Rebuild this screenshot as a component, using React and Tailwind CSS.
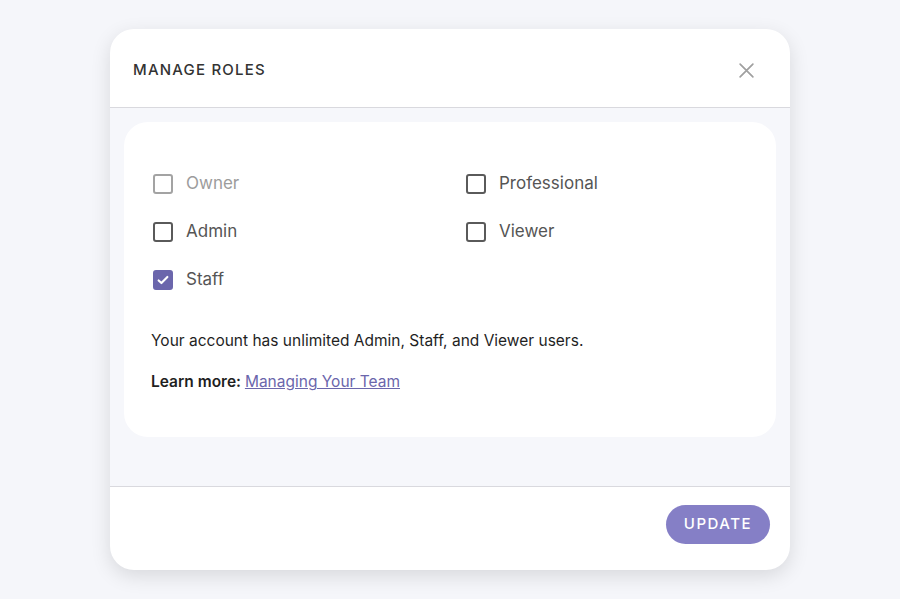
import { useState } from "react"

const roles = [
  { name: "Owner", disabled: true },
  { name: "Professional" },
  { name: "Admin" },
  { name: "Viewer" },
  { name: "Staff" },
]

const Checkbox = ({ label, checked, disabled, onChange }) => (
  <label className={`flex items-center h-[48px] ${disabled ? "cursor-default" : "cursor-pointer"}`}>
    <span
      className={`w-[20px] h-[20px] rounded-[3px] flex items-center justify-center ${
        checked
          ? "bg-[#6b66ac] border-2 border-[#6b66ac]"
          : disabled
          ? "border-2 border-[#a3a3a3]"
          : "border-2 border-[#5a5a5a]"
      }`}
      onClick={() => !disabled && onChange()}
    >
      {checked && (
        <svg viewBox="0 0 16 16" className="w-[14px] h-[14px]" fill="none" stroke="white" strokeWidth="2.4" strokeLinecap="round" strokeLinejoin="round">
          <path d="M3 8.5l3.2 3L13 4.5" />
        </svg>
      )}
    </span>
    <span className={`ml-[13px] text-[17px] ${disabled ? "text-[#9c9c9c]" : "text-[#555555]"}`}>{label}</span>
  </label>
)

export default function App() {
  const [selected, setSelected] = useState({ Staff: true })

  const toggle = (name) => setSelected((s) => ({ ...s, [name]: !s[name] }))

  return (
    <div className="w-full h-[599px] bg-[#f5f6fa] flex justify-center pt-[29px]" style={{ fontFamily: "Inter, 'Liberation Sans', sans-serif" }}>
      <div className="w-[680px] h-[541px] bg-white rounded-[24px] shadow-[0_6px_20px_rgba(0,0,0,0.12)] flex flex-col overflow-hidden">
        <div className="h-[79px] shrink-0 flex items-center justify-between pl-[23px] pr-[35px] pt-[4px] border-b border-[#d9d9de]">
          <h2 className="text-[15px] font-medium tracking-[0.08em] text-[#333333]">MANAGE ROLES</h2>
          <button className="text-[#a0a0a0]">
            <svg viewBox="0 0 16 16" className="w-[17px] h-[17px]" fill="none" stroke="currentColor" strokeWidth="1.6" strokeLinecap="round">
              <path d="M2 2l12 12M14 2L2 14" />
            </svg>
          </button>
        </div>
        <div className="flex-1 bg-[#f6f7fb] px-[14px] pt-[14px] border-b border-[#d9d9de]">
          <div className="bg-white rounded-[24px] h-[315px] pl-[29px] pt-[38px]">
            <div className="grid grid-cols-[313px_1fr]">
              {roles.map((r) => (
                <Checkbox
                  key={r.name}
                  label={r.name}
                  disabled={r.disabled}
                  checked={!!selected[r.name]}
                  onChange={() => toggle(r.name)}
                />
              ))}
            </div>
            <p className="mt-[25px] -ml-[2px] text-[15.5px] text-[#1f1f1f]">Your account has unlimited Admin, Staff, and Viewer users.</p>
            <p className="mt-[18px] -ml-[2px] text-[15.5px] text-[#1f1f1f]">
              <span className="font-semibold">Learn more: </span>
              <a href="#" className="text-[#6b66ac] underline">Managing Your Team</a>
            </p>
          </div>
        </div>
        <div className="h-[83px] shrink-0 flex items-start justify-end pr-[20px] pt-[18px]">
          <button className="h-[39px] px-[18px] rounded-full bg-[#857fc6] text-white text-[15px] font-medium tracking-[0.1em]">UPDATE</button>
        </div>
      </div>
    </div>
  )
}
